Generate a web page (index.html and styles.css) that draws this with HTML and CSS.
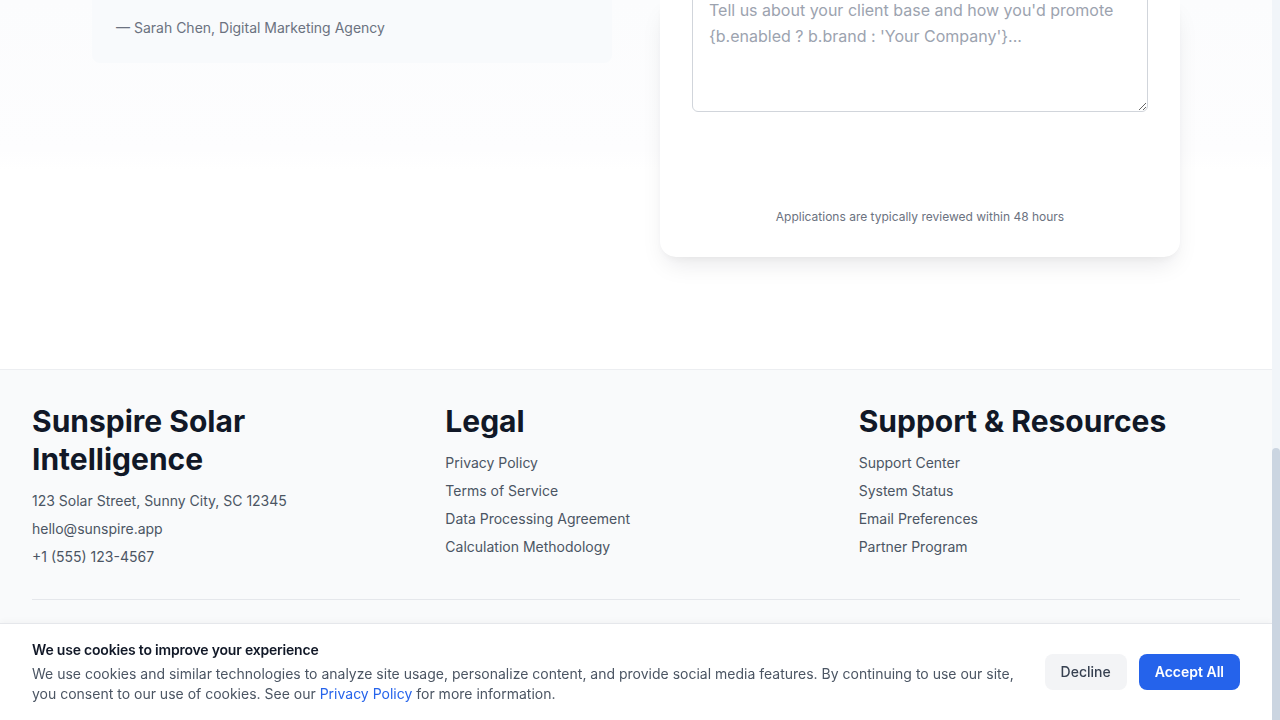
FILE: index.html
```html
<!DOCTYPE html>
<html lang="en">
<head>
<meta charset="utf-8">
<title>Sunspire Solar Intelligence – Partner Program</title>
<link rel="stylesheet" href="styles.css">
</head>
<body>
<div class="page">
  <section class="apply">
    <div class="apply-inner">
      <div class="col-left">
        <div class="testimonial">
          <p class="author">— Sarah Chen, Digital Marketing Agency</p>
        </div>
      </div>
      <div class="form-card">
        <textarea class="message" rows="4" placeholder="Tell us about your client base and how you'd promote {b.enabled ? b.brand : 'Your Company'}..."></textarea>
        <p class="note">Applications are typically reviewed within 48 hours</p>
      </div>
    </div>
  </section>

  <footer class="footer">
    <div class="footer-grid">
      <div class="fcol">
        <h2 class="fhead">Sunspire Solar Intelligence</h2>
        <ul class="flist">
          <li>123 Solar Street, Sunny City, SC 12345</li>
          <li><a href="#">hello@sunspire.app</a></li>
          <li><a href="#">+1 (555) 123-4567</a></li>
        </ul>
      </div>
      <div class="fcol">
        <h2 class="fhead">Legal</h2>
        <ul class="flist">
          <li><a href="#">Privacy Policy</a></li>
          <li><a href="#">Terms of Service</a></li>
          <li><a href="#">Data Processing Agreement</a></li>
          <li><a href="#">Calculation Methodology</a></li>
        </ul>
      </div>
      <div class="fcol">
        <h2 class="fhead">Support &amp; Resources</h2>
        <ul class="flist">
          <li><a href="#">Support Center</a></li>
          <li><a href="#">System Status</a></li>
          <li><a href="#">Email Preferences</a></li>
          <li><a href="#">Partner Program</a></li>
        </ul>
      </div>
    </div>
    <div class="footer-bottom"></div>
  </footer>
</div>

<div class="cookie">
  <div class="cookie-text">
    <p class="cookie-title">We use cookies to improve your experience</p>
    <p class="cookie-body">We use cookies and similar technologies to analyze site usage, personalize content, and provide social media features. By continuing to use our site, you consent to our use of cookies. See our <a class="cookie-link" href="#">Privacy Policy</a> for more information.</p>
  </div>
  <div class="cookie-actions">
    <button class="btn btn-decline" type="button">Decline</button>
    <button class="btn btn-accept" type="button">Accept All</button>
  </div>
</div>

<div class="scrollbar"><div class="scrollbar-thumb"></div></div>
</body>
</html>
```

FILE: styles.css
```css
* { box-sizing: border-box; }

html, body {
  margin: 0;
  padding: 0;
  height: 720px;
  overflow: hidden;
}

body {
  font-family: Inter, "Noto Sans", "Liberation Sans", sans-serif;
  color: #111827;
  background: #ffffff;
}

p, h2, ul { margin: 0; padding: 0; }
ul { list-style: none; }
a { color: inherit; text-decoration: none; }

.page {
  margin-right: 8px;
}

/* ---------- apply section ---------- */
.apply {
  background: linear-gradient(180deg, #fbfcfd 0px, #fdfdfe 150px, #ffffff 170px);
  padding-bottom: 112px;
}

.apply-inner {
  width: 1088px;
  margin: 0 auto;
  display: grid;
  grid-template-columns: 1fr 1fr;
  gap: 48px;
  align-items: start;
}

.testimonial {
  background: #f8fafc;
  border-radius: 0 0 8px 8px;
  padding: 18px 24px 25px;
}

.author {
  font-size: 14px;
  line-height: 20px;
  color: #6b7280;
}

.form-card {
  background: #ffffff;
  border-radius: 0 0 16px 16px;
  padding: 0 32px 32px;
  box-shadow: 0 12px 24px -6px rgba(15, 23, 42, 0.10), 0 4px 8px -4px rgba(15, 23, 42, 0.06);
  display: flex;
  flex-direction: column;
}

.message {
  display: block;
  width: 100%;
  height: 116px;
  margin-top: -4px;
  padding: 0 16px;
  border: 1px solid #d1d5db;
  border-radius: 0 0 6px 6px;
  font-family: Inter, "Noto Sans", "Liberation Sans", sans-serif;
  font-size: 16px;
  line-height: 26px;
  color: #111827;
  background: #ffffff;
  resize: vertical;
  outline: none;
}

.message::placeholder {
  color: #9ca3af;
  opacity: 1;
}

.note {
  margin-top: 97px;
  font-size: 12px;
  line-height: 16px;
  color: #6b7280;
  text-align: center;
}

/* ---------- footer ---------- */
.footer {
  background: #f9fafb;
  border-top: 1px solid #eceef1;
  padding: 32px 32px 60px;
}

.footer-grid {
  display: grid;
  grid-template-columns: repeat(3, 1fr);
  gap: 32px;
}

.fhead {
  font-size: 30px;
  line-height: 38px;
  font-weight: 700;
  color: #111827;
  margin-bottom: 13px;
}

.flist {
  display: flex;
  flex-direction: column;
  gap: 8px;
}

.flist li {
  font-size: 14px;
  line-height: 20px;
  color: #4b5563;
}

.footer-bottom {
  margin-top: 32px;
  border-top: 1px solid #e5e7eb;
}

/* ---------- cookie banner ---------- */
.cookie {
  position: fixed;
  left: 0;
  right: 8px;
  bottom: 0;
  height: 97px;
  background: #ffffff;
  border-top: 1px solid #e5e7eb;
  padding: 16px 32px;
  display: flex;
  align-items: center;
  gap: 16px;
  box-shadow: 0 -2px 6px rgba(15, 23, 42, 0.03);
}

.cookie-text {
  flex: 1;
}

.cookie-title {
  font-size: 14px;
  line-height: 20px;
  font-weight: 600;
  color: #111827;
  letter-spacing: -0.2px;
  margin-bottom: 3px;
  position: relative;
  top: -1px;
}

.cookie-body {
  font-size: 14px;
  line-height: 20px;
  color: #4b5563;
}

.cookie-link {
  color: #2563eb;
}

.cookie-actions {
  display: flex;
  gap: 12px;
  flex-shrink: 0;
}

.btn {
  font-family: Inter, "Noto Sans", "Liberation Sans", sans-serif;
  font-size: 14px;
  line-height: 20px;
  font-weight: 500;
  padding: 8px 16px;
  border: none;
  border-radius: 8px;
  cursor: pointer;
}

.btn-decline {
  background: #f3f4f6;
  color: #374151;
}

.btn-accept {
  background: #2563eb;
  color: #ffffff;
  font-weight: 600;
}

/* ---------- fake scrollbar (page is scrolled to the bottom) ---------- */
.scrollbar {
  position: fixed;
  top: 0;
  right: 0;
  width: 8px;
  height: 720px;
  background: #f1f5f9;
  display: flex;
  flex-direction: column;
  justify-content: flex-end;
}

.scrollbar-thumb {
  height: 272px;
  background: #cbd5e1;
  border-radius: 4px 4px 0 0;
}
```
